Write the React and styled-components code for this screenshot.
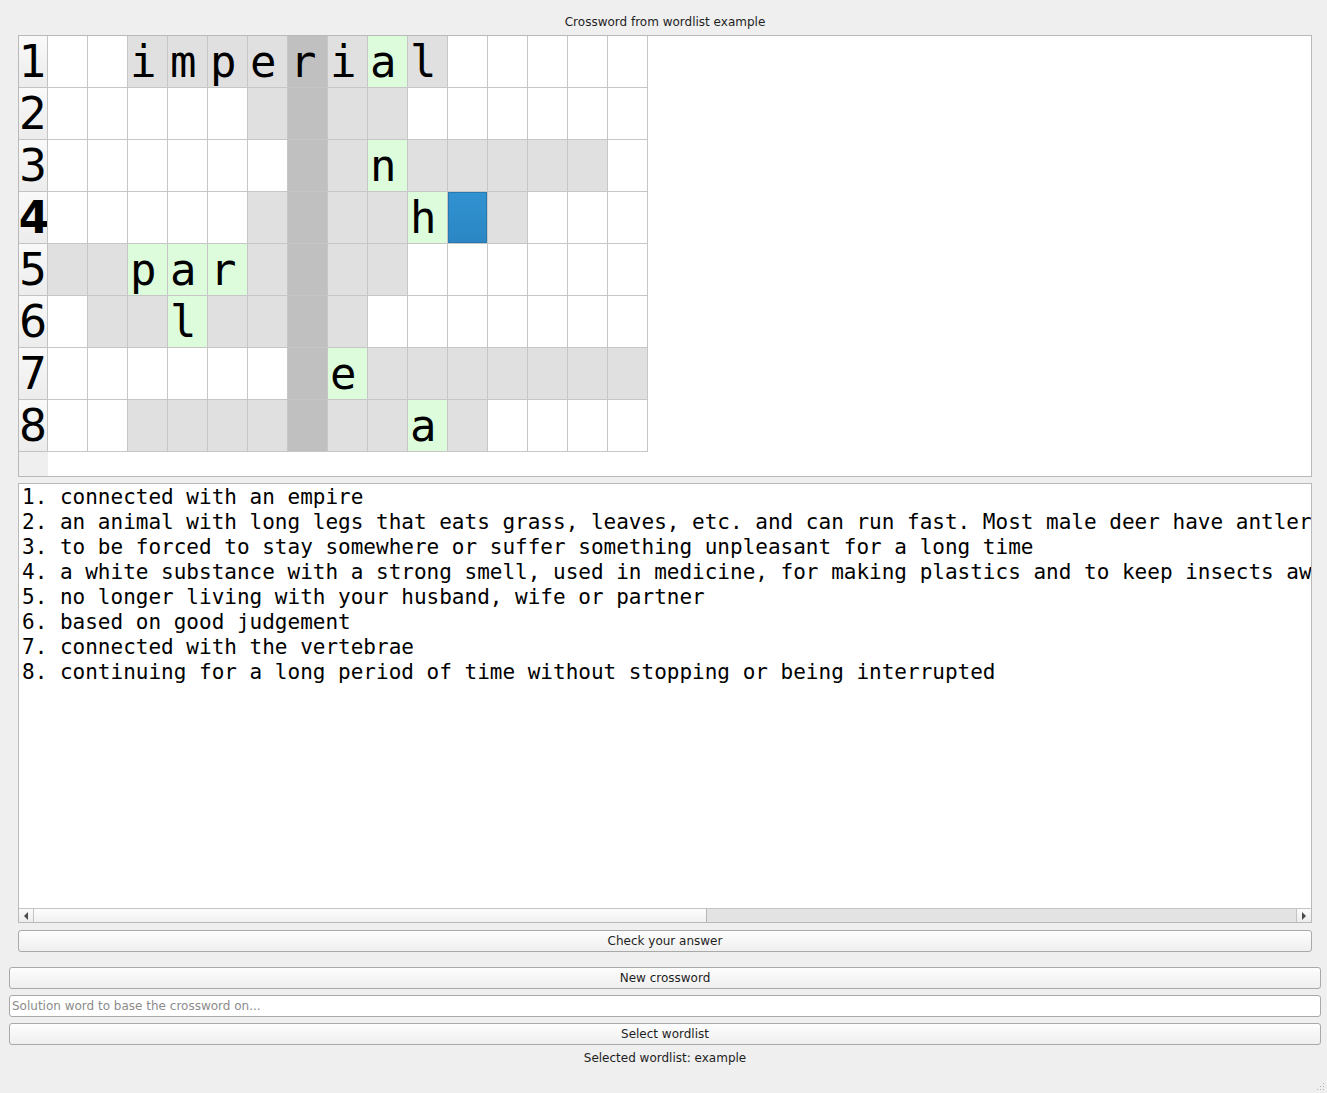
import React from 'react'
import styled, { createGlobalStyle } from 'styled-components'

const GlobalStyle = createGlobalStyle`
  html, body {
    margin: 0;
    padding: 0;
    background: #efefef;
  }
  body {
    font-family: "DejaVu Sans", "Liberation Sans", sans-serif;
    color: #1e1e1e;
  }
`

const Window = styled.div`
  position: relative;
  width: 1327px;
  height: 1093px;
  box-sizing: border-box;
  padding: 9px 6px 0 9px;
  display: flex;
  flex-direction: column;
  background: #efefef;
`

const CentralPanel = styled.div`
  display: flex;
  flex-direction: column;
  padding: 6px 9px 0 9px;
`

const Title = styled.div`
  height: 14px;
  line-height: 14px;
  font-size: 12px;
  text-align: center;
  margin-bottom: 6px;
`

const TableFrame = styled.div`
  height: 442px;
  box-sizing: border-box;
  border: 1px solid #b9b9b9;
  background: #fff;
  display: flex;
  overflow: hidden;
`

const HeaderColumn = styled.div`
  width: 29px;
  display: flex;
  flex-direction: column;
  background: #efefef;
`

const HeaderCell = styled.div`
  box-sizing: border-box;
  width: 29px;
  height: 52px;
  border-right: 1px solid #c3c3c3;
  border-bottom: 1px solid #c3c3c3;
  background: linear-gradient(#f9f9f9, #ececec);
  display: flex;
  justify-content: center;
  font-family: "DejaVu Sans", sans-serif;
  font-size: 44px;
  line-height: 51px;
  font-weight: ${p => (p.$current ? 'bold' : 'normal')};
  letter-spacing: ${p => (p.$current ? '-2px' : '0')};
  color: #000;
  overflow: hidden;
`

const Grid = styled.div`
  display: grid;
  grid-template-columns: repeat(15, 40px);
  grid-auto-rows: 52px;
  align-content: start;
`

const cellColours = {
  w: '#ffffff',
  g: '#e0e0e0',
  d: '#c0c0c0',
  n: '#dcfcdc',
  b: 'linear-gradient(#3192d2, #2b86c3)',
}

const Cell = styled.div`
  box-sizing: border-box;
  width: 40px;
  height: 52px;
  border-right: 1px solid #c6c6c6;
  border-bottom: 1px solid #c6c6c6;
  background: ${p => cellColours[p.$kind]};
  box-shadow: ${p => (p.$kind === 'b' ? 'inset 0 0 0 1px #2a78b0' : 'none')};
  font-family: "DejaVu Sans Mono", monospace;
  font-size: 44px;
  line-height: 51px;
  padding-left: 2px;
  color: #000;
  overflow: hidden;
`

const CluePanel = styled.div`
  margin-top: 6px;
  height: 440px;
  box-sizing: border-box;
  border: 1px solid #b9b9b9;
  background: #fff;
  display: flex;
  flex-direction: column;
`

const ClueText = styled.div`
  flex: 1;
  overflow: hidden;
  white-space: pre;
  padding: 1px 3px;
  font-family: "DejaVu Sans Mono", monospace;
  font-size: 21px;
  line-height: 25px;
  color: #000;
`

const ScrollBar = styled.div`
  height: 13px;
  border-top: 1px solid #c4c4c4;
  display: flex;
  background: #e3e3e3;
`

const ArrowButton = styled.div`
  width: 15px;
  box-sizing: border-box;
  display: flex;
  align-items: center;
  justify-content: center;
  background: linear-gradient(#fbfbfb, #ececec);
  border-left: ${p => (p.$side === 'right' ? '1px solid #c4c4c4' : 'none')};
  border-right: ${p => (p.$side === 'left' ? '1px solid #c4c4c4' : 'none')};
`

const Arrow = styled.div`
  width: 0;
  height: 0;
  border-top: 4px solid transparent;
  border-bottom: 4px solid transparent;
  border-left: ${p => (p.$side === 'right' ? '4px solid #4a4a4a' : 'none')};
  border-right: ${p => (p.$side === 'left' ? '4px solid #4a4a4a' : 'none')};
`

const Thumb = styled.div`
  width: 673px;
  box-sizing: border-box;
  background: linear-gradient(#fdfdfd, #f0f0f0);
  border-right: 1px solid #b6b6b6;
`

const Track = styled.div`
  flex: 1;
`

const PushButton = styled.div`
  height: 22px;
  box-sizing: border-box;
  border: 1px solid #a9a9a9;
  border-radius: 3px;
  background: linear-gradient(#fdfdfd, #efefef);
  font-size: 12px;
  line-height: 20px;
  text-align: center;
  color: #1e1e1e;
  margin-top: ${p => p.$gap || 0}px;
`

const LineEdit = styled.input`
  height: 22px;
  box-sizing: border-box;
  margin: 6px 0 0 0;
  border: 1px solid #a9a9a9;
  border-radius: 3px;
  background: #fff;
  padding: 0 2px;
  font-family: "DejaVu Sans", sans-serif;
  font-size: 12px;
  outline: none;
  &::placeholder {
    color: #8c8c8c;
  }
`

const StatusLabel = styled.div`
  margin-top: 6px;
  height: 14px;
  line-height: 14px;
  font-size: 12px;
  text-align: center;
`

const SizeGrip = styled.svg`
  position: absolute;
  right: 2px;
  bottom: 2px;
`

const rows = [
  ['wwggggdgngwwwww', '  imperial     '],
  ['wwwwwgdggwwwwww', '               '],
  ['wwwwwwdgngggggw', '        n      '],
  ['wwwwwgdggnbgwww', '         h     '],
  ['ggnnngdggwwwwww', '  par          '],
  ['wggnggdgwwwwwww', '   l           '],
  ['wwwwwwdnggggggg', '       e       '],
  ['wwggggdggngwwww', '         a     '],
]

const clues = [
  '1. connected with an empire',
  '2. an animal with long legs that eats grass, leaves, etc. and can run fast. Most male deer have antlers',
  '3. to be forced to stay somewhere or suffer something unpleasant for a long time',
  '4. a white substance with a strong smell, used in medicine, for making plastics and to keep insects away',
  '5. no longer living with your husband, wife or partner',
  '6. based on good judgement',
  '7. connected with the vertebrae',
  '8. continuing for a long period of time without stopping or being interrupted',
]

function App() {
  return (
    <Window>
      <GlobalStyle />
      <CentralPanel>
        <Title>Crossword from wordlist example</Title>
        <TableFrame>
          <HeaderColumn>
            {rows.map((r, i) => (
              <HeaderCell key={i} $current={i === 3}>{i + 1}</HeaderCell>
            ))}
          </HeaderColumn>
          <Grid>
            {rows.map(([kinds, letters], r) =>
              kinds.split('').map((k, c) => (
                <Cell key={r + '-' + c} $kind={k}>{letters[c].trim()}</Cell>
              ))
            )}
          </Grid>
        </TableFrame>

        <CluePanel>
          <ClueText>{clues.join('\n')}</ClueText>
          <ScrollBar>
            <ArrowButton $side="left"><Arrow $side="left" /></ArrowButton>
            <Thumb />
            <Track />
            <ArrowButton $side="right"><Arrow $side="right" /></ArrowButton>
          </ScrollBar>
        </CluePanel>

        <PushButton $gap={7}>Check your answer</PushButton>
      </CentralPanel>

      <PushButton $gap={15}>New crossword</PushButton>
      <LineEdit placeholder="Solution word to base the crossword on..." />
      <PushButton $gap={6}>Select wordlist</PushButton>
      <StatusLabel>Selected wordlist: example</StatusLabel>

      <SizeGrip width="10" height="10" viewBox="0 0 10 10">
        <rect x="8" y="2" width="1" height="1" fill="#b0b0b0" />
        <rect x="5" y="5" width="1" height="1" fill="#b0b0b0" />
        <rect x="8" y="5" width="1" height="1" fill="#b0b0b0" />
        <rect x="2" y="8" width="1" height="1" fill="#b0b0b0" />
        <rect x="5" y="8" width="1" height="1" fill="#b0b0b0" />
        <rect x="8" y="8" width="1" height="1" fill="#b0b0b0" />
      </SizeGrip>
    </Window>
  )
}

export default App
